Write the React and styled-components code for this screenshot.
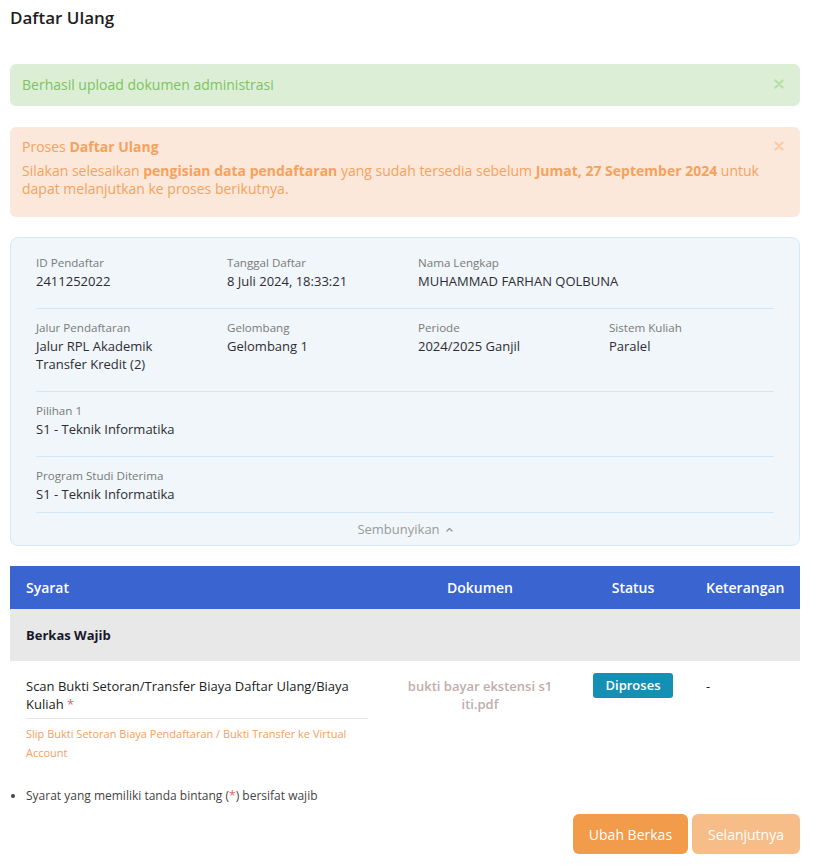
import React from "react";
import styled, { createGlobalStyle } from "styled-components";

const Global = createGlobalStyle`
  html, body { margin: 0; padding: 0; background: #fff; }
  body { font-family: "Open Sans", "Noto Sans", sans-serif; color: #333; }
  * { box-sizing: border-box; }
`;

const Page = styled.div`
  width: 824px;
  padding: 6px 24px 13px 10px;
`;

const Title = styled.h1`
  margin: 0 0 34px;
  font-size: 17px;
  line-height: 24px;
  font-weight: 600;
  color: #1e1e1e;
`;

const Alert = styled.div`
  position: relative;
  border-radius: 6px;
  padding: ${(p) => (p.$tone === "success" ? "11px 40px 11px 12px" : "10px 40px 19px 12px")};
  margin-bottom: ${(p) => (p.$tone === "success" ? "21px" : "20px")};
  background: ${(p) => (p.$tone === "success" ? "#dcefd6" : "#fce8da")};
  color: ${(p) => (p.$tone === "success" ? "#7cc35f" : "#f5a25d")};
  font-size: 14px;
  line-height: 20px;
`;

const CloseBtn = styled.span`
  position: absolute;
  right: 16px;
  top: ${(p) => p.$top}px;
  width: 10px;
  height: 10px;
  display: flex;
  color: ${(p) => p.$color};
`;

const AlertHead = styled.div`
  margin-bottom: 5px;
`;

const AlertBody = styled.div`
  line-height: 18px;
`;

const Card = styled.div`
  background: #f0f6f9;
  border: 1px solid #d4eafa;
  border-radius: 8px;
  padding: 6px 25px 0;
  margin-bottom: 20px;
`;

const InfoRow = styled.div`
  display: grid;
  grid-template-columns: 191px 191px 191px 1fr;
  padding: 10px 0 ${(p) => (p.$last ? "9px" : "18px")};
  border-bottom: 1px solid #d0e8fa;
`;

const Field = styled.div`
  display: flex;
  flex-direction: column;
  padding-right: 26px;
  grid-column: ${(p) => (p.$wide ? "span 2" : "auto")};
`;

const Label = styled.span`
  font-size: 11.6px;
  line-height: 18px;
  color: #7a7a7a;
`;

const Value = styled.span`
  font-size: 13px;
  line-height: 18px;
  color: #2f2c35;
`;

const Toggle = styled.div`
  display: flex;
  justify-content: center;
  align-items: center;
  gap: 6px;
  padding: 8px 0;
  font-size: 13px;
  line-height: 16px;
  color: #9a9a9a;
`;

const Table = styled.div`
  display: grid;
  grid-template-columns: 374px 192px 114px 110px;
`;

const HeadCell = styled.div`
  background: #3a64cf;
  color: #fff;
  font-weight: 600;
  font-size: 14px;
  height: 43px;
  display: flex;
  align-items: center;
  justify-content: ${(p) => (p.$center ? "center" : "flex-start")};
  padding: 0 16px;
`;

const GroupCell = styled.div`
  grid-column: 1 / -1;
  background: #e8e8e8;
  height: 52px;
  display: flex;
  align-items: center;
  padding: 0 16px;
  font-size: 13px;
  font-weight: 700;
  color: #16192b;
`;

const Cell = styled.div`
  padding: ${(p) => p.$pt || 16}px 16px 16px;
  text-align: ${(p) => (p.$center ? "center" : "left")};
  font-size: 13px;
  line-height: 18px;
`;

const ReqName = styled.div`
  color: #222;
  padding-bottom: 5px;
  border-bottom: 1px solid #e6e6e6;
`;

const Star = styled.span`
  color: #ef5a6a;
`;

const ReqDesc = styled.div`
  padding-top: 5px;
  font-size: 11px;
  line-height: 19px;
  color: #f5a060;
`;

const DocLink = styled.span`
  color: #c0adad;
  font-weight: 600;
`;

const Badge = styled.span`
  display: inline-block;
  background: #1590b4;
  color: #fff;
  font-weight: 600;
  font-size: 13px;
  line-height: 25px;
  height: 25px;
  border-radius: 3px;
  width: 80px;
  text-align: center;
`;

const Dash = styled.span`
  color: #222;
`;

const Notes = styled.ul`
  margin: 9px 0 0;
  padding-left: 16px;
  font-size: 12px;
  line-height: 17px;
  color: #444;
`;

const Actions = styled.div`
  display: flex;
  justify-content: flex-end;
  gap: 4px;
  margin-top: 10px;
`;

const Button = styled.button`
  height: 40px;
  border: none;
  border-radius: 6px;
  padding: 0 16px;
  background: ${(p) => (p.$disabled ? "#f6bd88" : "#f29b4a")};
  color: #fff;
  font-family: inherit;
  font-size: 14px;
  cursor: pointer;
`;

const XIcon = () => (
  <svg width="10" height="10" viewBox="0 0 10 10">
    <path d="M1.5 1.5 L8.5 8.5 M8.5 1.5 L1.5 8.5" stroke="currentColor" strokeWidth="2.4" strokeLinecap="round" />
  </svg>
);

const ChevronUp = () => (
  <svg width="7" height="5" viewBox="0 0 7 5">
    <path d="M1 4 L3.5 1.5 L6 4" fill="none" stroke="#9a9a9a" strokeWidth="1.4" strokeLinecap="round" strokeLinejoin="round" />
  </svg>
);

const info = [
  [
    ["ID Pendaftar", "2411252022"],
    ["Tanggal Daftar", "8 Juli 2024, 18:33:21"],
    ["Nama Lengkap", "MUHAMMAD FARHAN QOLBUNA", true],
  ],
  [
    ["Jalur Pendaftaran", "Jalur RPL Akademik Transfer Kredit (2)"],
    ["Gelombang", "Gelombang 1"],
    ["Periode", "2024/2025 Ganjil"],
    ["Sistem Kuliah", "Paralel"],
  ],
  [["Pilihan 1", "S1 - Teknik Informatika", true]],
  [["Program Studi Diterima", "S1 - Teknik Informatika", true]],
];

export default function App() {
  return (
    <>
      <Global />
      <Page>
        <Title>Daftar Ulang</Title>

        <Alert $tone="success">
          Berhasil upload dokumen administrasi
          <CloseBtn $top={15} $color="#b8dfa6">
            <XIcon />
          </CloseBtn>
        </Alert>

        <Alert $tone="warning">
          <AlertHead>
            Proses <b>Daftar Ulang</b>
          </AlertHead>
          <AlertBody>
            Silakan selesaikan <b>pengisian data pendaftaran</b> yang sudah tersedia sebelum{" "}
            <b>Jumat, 27 September 2024</b> untuk <span>dapat melanjutkan ke proses berikutnya.</span>
          </AlertBody>
          <CloseBtn $top={14} $color="#f9cca8">
            <XIcon />
          </CloseBtn>
        </Alert>

        <Card>
          {info.map((row, i) => (
            <InfoRow key={i} $last={i === info.length - 1}>
              {row.map(([l, v, wide]) => (
                <Field key={l} $wide={wide}>
                  <Label>{l}</Label>
                  <Value>{v}</Value>
                </Field>
              ))}
            </InfoRow>
          ))}
          <Toggle>
            Sembunyikan <ChevronUp />
          </Toggle>
        </Card>

        <Table>
          <HeadCell>Syarat</HeadCell>
          <HeadCell $center>Dokumen</HeadCell>
          <HeadCell $center>Status</HeadCell>
          <HeadCell>Keterangan</HeadCell>
          <GroupCell>Berkas Wajib</GroupCell>
          <Cell>
            <ReqName>
              Scan Bukti Setoran/Transfer Biaya Daftar Ulang/Biaya <span>Kuliah</span> <Star>*</Star>
            </ReqName>
            <ReqDesc>Slip Bukti Setoran Biaya Pendaftaran / Bukti Transfer ke Virtual Account</ReqDesc>
          </Cell>
          <Cell $center>
            <DocLink>bukti bayar ekstensi s1 iti.pdf</DocLink>
          </Cell>
          <Cell $center $pt={12}>
            <Badge>Diproses</Badge>
          </Cell>
          <Cell>
            <Dash>-</Dash>
          </Cell>
        </Table>

        <Notes>
          <li>
            Syarat yang memiliki tanda bintang (<Star>*</Star>) bersifat wajib
          </li>
        </Notes>

        <Actions>
          <Button>Ubah Berkas</Button>
          <Button $disabled>Selanjutnya</Button>
        </Actions>
      </Page>
    </>
  );
}
